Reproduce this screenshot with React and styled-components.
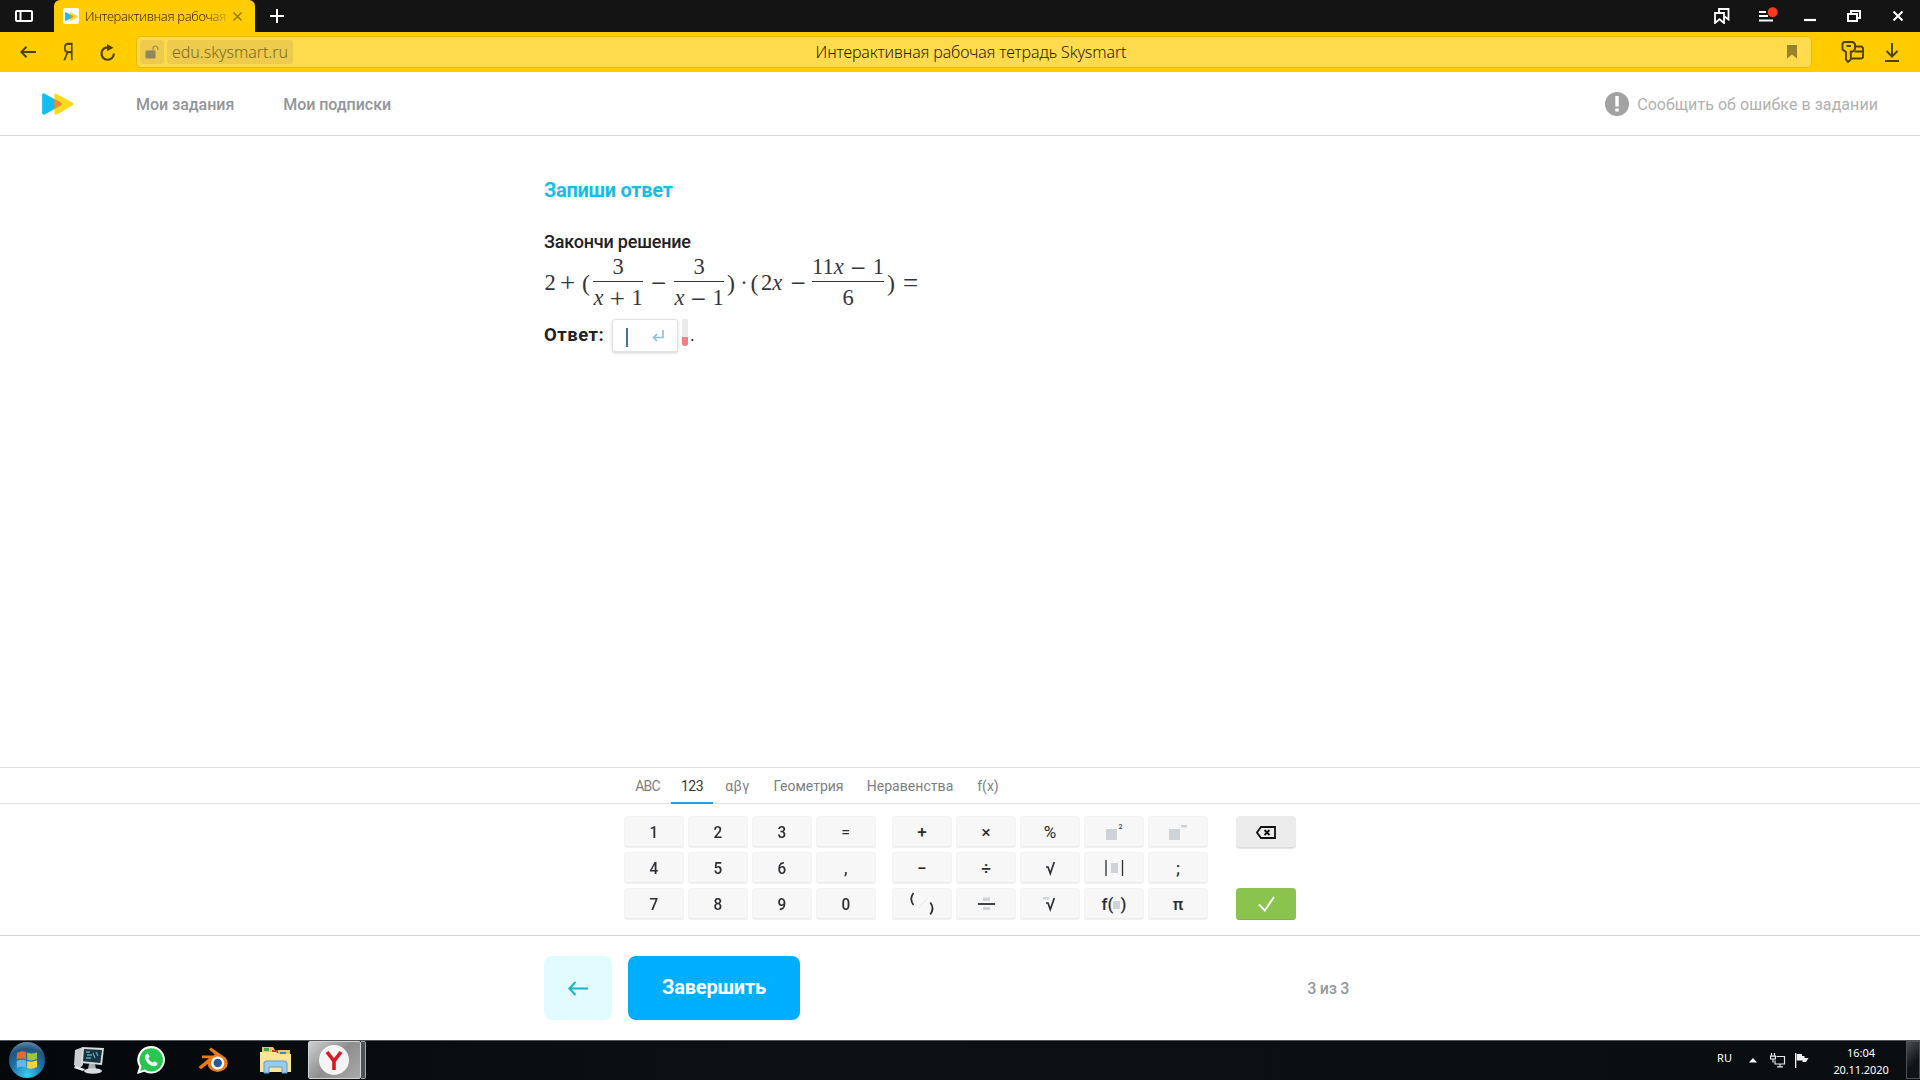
import React from "react"
import styled, { createGlobalStyle, css } from "styled-components"

const GlobalStyle = createGlobalStyle`
    * {
        box-sizing: border-box;
    }
    body {
        margin: 0;
        background: #fff;
        overflow: hidden;
        font-family: Roboto, "Liberation Sans", sans-serif;
    }
    button {
        border: none;
        padding: 0;
        margin: 0;
        background: none;
        font-family: inherit;
    }
    svg {
        display: block;
        flex-shrink: 0;
    }
`

const digits = ["1", "2", "3", "=", "4", "5", "6", ",", "7", "8", "9", "0"]

export default function App() {
    return (
        <>
            <GlobalStyle />
            <Screen>
                <BrowserTabs />
                <BrowserToolbar />
                <SiteHeader />
                <Task />
                <MathKeyboard />
                <BottomBar />
                <Taskbar />
            </Screen>
        </>
    )
}

function PlayLogo({ width, height }) {
    return (
        <svg width={width} height={height} viewBox="0 0 32 22">
            <path
                d="M14 0.4L30.4 9.4Q32.6 11 30.4 12.6L15 21.6Q12.5 22.4 12.4 20V2Q12.4 0.2 14 0.4Z"
                fill="#fddb1c"
            />
            <path
                d="M2.4 0.5L18.6 9.4Q21 11 18.6 12.6L2.8 21.5Q0.2 22.4 0.1 20V2Q0.3 -0.2 2.4 0.5Z"
                fill="#12bcf5"
            />
            <path
                d="M12.4 6L18.6 9.4Q21 11 18.6 12.6L12.4 16.1Z"
                fill="#f58a1f"
            />
        </svg>
    )
}

function BrowserTabs() {
    return (
        <TabStrip>
            <PanelCell>
                <svg width="18" height="12" viewBox="0 0 18 12" fill="none" stroke="#fff" strokeWidth="2">
                    <rect x="1" y="1" width="16" height="10" rx="1" />
                    <path d="M5.5 1V11" />
                </svg>
            </PanelCell>
            <BrowserTab>
                <Favicon>
                    <PlayLogo width={13} height={9} />
                </Favicon>
                <TabTitle>Интерактивная рабочая</TabTitle>
                <svg width="9" height="9" viewBox="0 0 9 9" stroke="#8d7413" strokeWidth="1.3">
                    <path d="M0.5 0.5L8.5 8.5M8.5 0.5L0.5 8.5" />
                </svg>
            </BrowserTab>
            <NewTab>
                <svg width="14" height="14" viewBox="0 0 14 14" stroke="#fff" strokeWidth="2">
                    <path d="M7 0V14M0 7H14" />
                </svg>
            </NewTab>
            <WindowCell>
                <svg width="16" height="16" viewBox="0 0 16 16" fill="none" stroke="#fff" strokeWidth="1.8">
                    <path d="M1 5H10V15L5.5 11.2L1 15Z" />
                    <path d="M5 5V1H14.5V11.5L10.5 8.5" />
                </svg>
            </WindowCell>
            <WindowCell>
                <svg width="24" height="18" viewBox="0 0 24 18">
                    <path d="M5 5H12M5 9H14M5 13.5H19" stroke="#fff" strokeWidth="2" />
                    <circle cx="18.7" cy="5.2" r="5" fill="#ff3b1f" />
                </svg>
            </WindowCell>
            <WindowCell>
                <svg width="12" height="16" viewBox="0 0 12 16">
                    <path d="M0 12H12" stroke="#fff" strokeWidth="2.2" />
                </svg>
            </WindowCell>
            <WindowCell>
                <svg width="14" height="12" viewBox="0 0 14 12" fill="none" stroke="#fff" strokeWidth="2">
                    <rect x="1" y="4" width="9" height="7" />
                    <path d="M4 4V1H13V8H10" />
                </svg>
            </WindowCell>
            <WindowCell>
                <svg width="10" height="10" viewBox="0 0 10 10" stroke="#fff" strokeWidth="2">
                    <path d="M0.5 0.5L9.5 9.5M9.5 0.5L0.5 9.5" />
                </svg>
            </WindowCell>
        </TabStrip>
    )
}

function BrowserToolbar() {
    return (
        <Toolbar>
            <ToolCell>
                <svg width="16" height="12" viewBox="0 0 16 12" fill="none" stroke="#4d4112" strokeWidth="2">
                    <path d="M16 6H1.5M6.5 0.8L1.3 6L6.5 11.2" />
                </svg>
            </ToolCell>
            <ToolCell>
                <YandexLetter>Я</YandexLetter>
            </ToolCell>
            <ToolCell>
                <svg width="16" height="17" viewBox="0 0 16 17">
                    <path d="M13.9 9.5A6.2 6.2 0 1 1 8.5 3.4" fill="none" stroke="#4d4112" strokeWidth="2.2" />
                    <path d="M7 0L13.5 3.8L7 7.2Z" fill="#4d4112" />
                </svg>
            </ToolCell>
            <AddressBar>
                <LockChip>
                    <svg width="14" height="14" viewBox="0 0 14 14">
                        <rect x="0.5" y="5.5" width="10" height="8" rx="1" fill="#8f855f" />
                        <path d="M8 6V3.5A2.4 2.4 0 0 1 12.8 3.5V5" fill="none" stroke="#a3965a" strokeWidth="1.4" />
                    </svg>
                </LockChip>
                <UrlChip>edu.skysmart.ru</UrlChip>
                <PageTitle>Интерактивная рабочая тетрадь Skysmart</PageTitle>
                <svg width="10" height="14" viewBox="0 0 10 14">
                    <path d="M0 0H10V13.5L5 9.5L0 13.5Z" fill="#96812d" />
                </svg>
            </AddressBar>
            <ToolCell>
                <svg width="23" height="22" viewBox="0 0 23 22" fill="none" stroke="#4d4112" strokeWidth="1.9" strokeLinejoin="round">
                    <path d="M3 1H12L14 3V8L12 10.5H9.8V18.5L7 21L5 18.5V11L1.5 8.5V2.5Z" />
                    <path d="M5.5 5H10" />
                    <path d="M14.5 5.5H20.5L22 7V16.5L20.5 17.5H10.5M13.5 10.5H22" />
                </svg>
            </ToolCell>
            <ToolCell>
                <svg width="14" height="19" viewBox="0 0 14 19" fill="none" stroke="#4d4112" strokeWidth="2">
                    <path d="M7 0V13M1.5 8L7 13.5L12.5 8M0 18H14" />
                </svg>
            </ToolCell>
        </Toolbar>
    )
}

function SiteHeader() {
    return (
        <Header>
            <LogoLink>
                <PlayLogo width={32} height={22} />
            </LogoLink>
            <NavLink>Мои задания</NavLink>
            <NavLink>Мои подписки</NavLink>
            <Report>
                <ReportBadge>
                    <svg width="4" height="16" viewBox="0 0 4 16" fill="#fff">
                        <rect x="0.3" width="3.4" height="10.5" />
                        <rect x="0.3" y="12.5" width="3.4" height="3" />
                    </svg>
                </ReportBadge>
                <ReportText>Сообщить об ошибке в задании</ReportText>
            </Report>
        </Header>
    )
}

function Task() {
    return (
        <Main>
            <TaskTitle>Запиши ответ</TaskTitle>
            <TaskText>Закончи решение</TaskText>
            <Formula>
                <Term $w={12}>2</Term>
                <Sign $w={23}>+</Sign>
                <Paren $w={14}>(</Paren>
                <Fraction $w={50}>
                    <Numerator>3</Numerator>
                    <Denominator>
                        <i>x</i>
                        <Sign $w={28}>+</Sign>1
                    </Denominator>
                </Fraction>
                <Sign $w={31}>−</Sign>
                <Fraction $w={50}>
                    <Numerator>3</Numerator>
                    <Denominator>
                        <i>x</i>
                        <Sign $w={28}>−</Sign>1
                    </Denominator>
                </Fraction>
                <Paren $w={14}>)</Paren>
                <Term $w={12}>·</Term>
                <Paren $w={9}>(</Paren>
                <Term $w={25}>
                    2<i>x</i>
                </Term>
                <Sign $w={28}>−</Sign>
                <Fraction $w={72}>
                    <Numerator>
                        11<i>x</i>
                        <Sign $w={29}>−</Sign>1
                    </Numerator>
                    <Denominator>6</Denominator>
                </Fraction>
                <Paren $w={14}>)</Paren>
                <Sign $w={25}>=</Sign>
            </Formula>
            <AnswerRow>
                <AnswerLabel>Ответ:</AnswerLabel>
                <AnswerBox>
                    <Caret />
                    <svg width="12" height="12" viewBox="0 0 12 12" fill="none" stroke="#8fbde2" strokeWidth="1.6">
                        <path d="M11 0V7.5H1.5M5 4L1.5 7.5L5 11" />
                    </svg>
                </AnswerBox>
                <Attempts>
                    <AttemptsFill />
                </Attempts>
                <Dot>.</Dot>
            </AnswerRow>
        </Main>
    )
}

function MathKeyboard() {
    return (
        <Keyboard>
            <KeyTabs>
                <KeyTab $w={47} $ls="-0.9px">
                    ABC
                </KeyTab>
                <KeyTab $w={42} $ls="-0.6px" $active>
                    123
                </KeyTab>
                <KeyTab $w={49} $ls="0.5px">
                    αβγ
                </KeyTab>
                <KeyTab $w={93}>Геометрия</KeyTab>
                <KeyTab $w={110} $ls="0.05px">
                    Неравенства
                </KeyTab>
                <KeyTab $w={46}>f(x)</KeyTab>
            </KeyTabs>
            <KeyArea>
                <KeyGrid $cols={4}>
                    {digits.map((d) => (
                        <Key key={d} $light={d === "="}>
                            <Glyph $narrow={d !== "=" && d !== ","}>{d}</Glyph>
                        </Key>
                    ))}
                </KeyGrid>
                <KeyGrid $cols={5}>
                    <Key>+</Key>
                    <Key>×</Key>
                    <Key $light>%</Key>
                    <Key>
                        <svg width="60" height="32" viewBox="0 0 60 32">
                            <rect x="22" y="13" width="11" height="11" fill="#cfd3d8" />
                            <text x="34.5" y="12.5" fontSize="7" fill="#3c4046">
                                2
                            </text>
                        </svg>
                    </Key>
                    <Key>
                        <svg width="60" height="32" viewBox="0 0 60 32" fill="#cfd3d8">
                            <rect x="21" y="13" width="11" height="11" />
                            <rect x="33" y="9" width="6" height="2.5" />
                        </svg>
                    </Key>
                    <Key>−</Key>
                    <Key>÷</Key>
                    <Key>
                        <Root />
                    </Key>
                    <Key>
                        <svg width="60" height="32" viewBox="0 0 60 32">
                            <path d="M22 8V24M38.5 8V24" stroke="#2b2e33" strokeWidth="1.3" />
                            <rect x="27" y="11" width="7" height="10" fill="#cfd3d8" />
                        </svg>
                    </Key>
                    <Key>;</Key>
                    <Key>
                        <svg width="60" height="32" viewBox="0 0 60 32" fill="none">
                            <path d="M21.5 5Q17 11 21.5 17M38.3 14.5Q42.8 20.5 38.3 26.5" stroke="#2b2e33" strokeWidth="1.7" />
                            <path d="M26 20L36 10" stroke="#ececec" />
                        </svg>
                    </Key>
                    <Key>
                        <svg width="60" height="32" viewBox="0 0 60 32">
                            <path d="M22 16H39" stroke="#2b2e33" strokeWidth="1.8" />
                            <rect x="27" y="9.5" width="7" height="3.5" fill="#cfd3d8" />
                            <rect x="27" y="19" width="7" height="3" fill="#cfd3d8" />
                        </svg>
                    </Key>
                    <Key>
                        <Root nth />
                    </Key>
                    <Key>
                        f(
                        <Slot />)
                    </Key>
                    <Key>π</Key>
                </KeyGrid>
                <SideKeys>
                    <EraseKey>
                        <svg width="20" height="13" viewBox="0 0 20 13" fill="none" stroke="#111" strokeWidth="1.8">
                            <path d="M5 1H19V12H5L1 6.5Z" />
                            <path d="M8.5 4L13.5 9M13.5 4L8.5 9" />
                        </svg>
                    </EraseKey>
                    <ConfirmKey>
                        <svg width="17" height="16" viewBox="0 0 17 16" fill="none" stroke="#fff" strokeWidth="1.8">
                            <path d="M1 8.5L6.8 14.5L16 1" />
                        </svg>
                    </ConfirmKey>
                </SideKeys>
            </KeyArea>
        </Keyboard>
    )
}

function Root({ nth }) {
    return (
        <svg width="60" height="32" viewBox="0 0 60 32" fill="none">
            {nth && <rect x="23" y="9" width="6" height="2.5" fill="#cfd3d8" />}
            <path d="M26 15H28L30.3 21.5L34.3 10" stroke="#2b2e33" strokeWidth="1.7" />
        </svg>
    )
}

function BottomBar() {
    return (
        <Footer>
            <BackButton>
                <svg width="20" height="15" viewBox="0 0 20 15" fill="none" stroke="#14b4c8" strokeWidth="1.9">
                    <path d="M20 7.5H1.5M7.5 1L1.3 7.5L7.5 14" />
                </svg>
            </BackButton>
            <FinishButton>Завершить</FinishButton>
            <Progress>3 из 3</Progress>
        </Footer>
    )
}

function Taskbar() {
    return (
        <Panel>
            <StartCell>
                <StartOrb>
                    <svg width="22" height="20" viewBox="0 0 22 20">
                        <path d="M1 3Q5.5 0 10 2.2V9.4Q5.5 7.6 0.6 9.6Z" fill="#e8692c" />
                        <path d="M11.2 2.6Q16 4.6 21 2.2V9Q16 11.4 11.2 9.8Z" fill="#9cc63c" />
                        <path d="M0.6 10.8Q5.5 8.8 10 10.6V17.6Q5.5 15.6 1 18Z" fill="#6db4ea" />
                        <path d="M11.2 11Q16 12.6 21 10.2V17Q16 19.8 11.2 18Z" fill="#fbd13c" />
                    </svg>
                </StartOrb>
            </StartCell>
            <AppCell>
                <svg width="32" height="30" viewBox="0 0 32 30">
                    <path d="M2 5L10 2V20L6 24L1 20Z" fill="#c9ced1" />
                    <path d="M9 2L31 3L29 20L8 18Z" fill="#d7dcde" />
                    <path d="M11 4L29 5L27.3 18L10 16.2Z" fill="#17333d" />
                    <path d="M13 7H17M14 10H19M20 8L22 13M23 7L25 11M13 13H18" stroke="#5ca5b5" strokeWidth="1.3" />
                    <path d="M16 19H22L23 24H15Z" fill="#a9afb2" />
                    <ellipse cx="20" cy="26" rx="9" ry="2.8" fill="#d9dddf" />
                    <path d="M2 21L12 24L10 26L1 23Z" fill="#eceeee" />
                </svg>
            </AppCell>
            <AppCell>
                <svg width="30" height="30" viewBox="0 0 30 30">
                    <path
                        d="M15 1A13.8 13.8 0 1 1 8.3 26.8L1 29L3.2 21.8A13.8 13.8 0 0 1 15 1Z"
                        fill="#fff"
                    />
                    <path
                        d="M15 3.2A11.7 11.7 0 1 1 8.7 24.6L4.1 26L5.5 21.5A11.7 11.7 0 0 1 15 3.2Z"
                        fill="#29c64f"
                    />
                    <path
                        d="M10.5 9Q12 8 12.6 9.5L13.4 11.5Q13.4 12.4 12.2 13.4Q13.8 16.5 16.8 17.8L18.3 16.2L21.5 17.9Q21.6 20.7 18 21.2Q11.5 20.4 8.8 13.2Q8.6 10.5 10.5 9Z"
                        fill="#fff"
                    />
                </svg>
            </AppCell>
            <AppCell>
                <svg width="31" height="26" viewBox="0 0 31 26">
                    <path
                        d="M13 0.5L28 11Q32 18 26.5 22.5Q19 27.5 12.2 22Q9.8 19.6 9.6 17L3 22.2L0.5 20L11 11.2H4V8.6H15.5L16.8 7.6L11 2.5Z"
                        fill="#ea7b17"
                    />
                    <circle cx="19.7" cy="16" r="6.6" fill="#fff" />
                    <circle cx="19.7" cy="16" r="4.2" fill="#2a5796" />
                </svg>
            </AppCell>
            <AppCell>
                <svg width="33" height="30" viewBox="0 0 33 30">
                    <path d="M3 2H14L16 5H31V27H3Z" fill="#e8c964" />
                    <path d="M5 3H10V6H5Z" fill="#47a447" />
                    <path d="M13 5H19V8H13Z" fill="#c9402c" />
                    <path d="M21 7H27V9H21Z" fill="#3c86c9" />
                    <path d="M1 7H17L19 9H32V27H1Z" fill="#f8e596" />
                    <path d="M5 28V18Q5 16 8 16H25Q28 16 28 18V28H23V22H10V28Z" fill="#9ccbe8" stroke="#5f9fca" />
                </svg>
            </AppCell>
            <ActiveApp>
                <svg width="30" height="30" viewBox="0 0 30 30">
                    <circle cx="15" cy="15" r="15" fill="#f4f4f4" />
                    <path d="M8 7L15 16L22 7M15 15.5V25" fill="none" stroke="#d81922" strokeWidth="3.6" />
                </svg>
            </ActiveApp>
            <StackEdge />
            <Tray>
                <Lang>RU</Lang>
                <svg width="8" height="5" viewBox="0 0 8 5">
                    <path d="M4 0L8 4.5H0Z" fill="#fff" />
                </svg>
                <NetworkIcon width="16" height="15" viewBox="0 0 16 15" fill="none" stroke="#e8e8e8" strokeWidth="1.2">
                    <path d="M6.5 3.5H14.5V11H5V7.5" />
                    <path d="M1.5 0V3M4.5 0V3M0.6 3.2H5.4V6H0.6ZM3 6V9.5M7 13.8H13M10 11V14" />
                </NetworkIcon>
                <svg width="15" height="15" viewBox="0 0 15 15" fill="#f2f2f2">
                    <path d="M1 0H2.3V15H1ZM2.8 1H8V3H10.5V5H14.5L12 9H8.5V7.5H2.8Z" />
                </svg>
            </Tray>
            <Clock>
                <ClockLine>16:04</ClockLine>
                <ClockLine $ls="-0.1px">20.11.2020</ClockLine>
            </Clock>
            <ShowDesktop />
        </Panel>
    )
}

const Screen = styled.div`
    width: 1920px;
    height: 1080px;
    display: flex;
    flex-direction: column;
    overflow: hidden;
`

const uiFont = css`
    font-family: "Noto Sans", "Open Sans", sans-serif;
    font-weight: 300;
`

const center = css`
    display: flex;
    align-items: center;
    justify-content: center;
`

/* browser */
const TabStrip = styled.div`
    height: 32px;
    flex-shrink: 0;
    background: #141414;
    display: flex;
`
const PanelCell = styled.div`
    ${center}
    width: 48px;
    margin-right: 6px;
`
const BrowserTab = styled.div`
    width: 201px;
    background: #ffcc00;
    border-radius: 6px 6px 0 0;
    display: flex;
    align-items: center;
    padding-left: 9px;
`
const Favicon = styled.div`
    ${center}
    width: 16px;
    height: 16px;
    background: #fff;
    border-radius: 2px;
`
const TabTitle = styled.div`
    ${uiFont}
    width: 143px;
    margin: 0 5px 0 6px;
    font-size: 13px;
    letter-spacing: -0.33px;
    color: transparent;
    white-space: nowrap;
    background: linear-gradient(90deg, #3a2400 84%, #d9ae00 100%);
    background-clip: text;
`
const NewTab = styled.div`
    ${center}
    width: 44px;
    margin-right: auto;
`
const WindowCell = styled.div`
    ${center}
    width: 44px;
`

const Toolbar = styled.div`
    height: 40px;
    flex-shrink: 0;
    background: #ffcc00;
    display: flex;
    align-items: center;
    padding: 0 8px;
`
const ToolCell = styled.div`
    ${center}
    width: 40px;
    height: 40px;
`
const YandexLetter = styled.span`
    font-family: "Liberation Sans", sans-serif;
    font-size: 23px;
    line-height: 24px;
    color: #4d4112;
    transform: scaleX(0.64);
    -webkit-text-stroke: 0.4px #4d4112;
`
const AddressBar = styled.div`
    flex: 1;
    height: 32px;
    margin: 0 20px 0 8px;
    padding: 0 14px 0 3px;
    background: #ffdb4d;
    border: 1px solid #e9bb0c;
    border-radius: 5px;
    display: flex;
    align-items: center;
`
const LockChip = styled.div`
    ${center}
    width: 24px;
    height: 24px;
    margin-right: 3px;
    background: #eecb4c;
    border-radius: 3px;
`
const UrlChip = styled.div`
    ${uiFont}
    ${center}
    width: 126px;
    height: 24px;
    font-size: 16px;
    letter-spacing: -0.05px;
    color: #7d6a20;
    background: #eecb4c;
    border-radius: 3px;
`
const PageTitle = styled.div`
    ${uiFont}
    flex: 1;
    text-align: center;
    padding-right: 138px;
    font-size: 16px;
    letter-spacing: -0.11px;
    color: #2d1a05;
`

/* site header */
const Header = styled.header`
    height: 64px;
    flex-shrink: 0;
    border-bottom: 1px solid #d9d9d9;
    display: flex;
    align-items: center;
    padding: 0 42px;
`
const LogoLink = styled.div`
    width: 94px;
`
const NavLink = styled.a`
    margin-right: 49px;
    padding-top: 2px;
    font-size: 16px;
    font-weight: 500;
    letter-spacing: -0.04px;
    color: #92959a;
`
const Report = styled.div`
    display: flex;
    align-items: center;
    margin-left: auto;
`
const ReportText = styled.span`
    padding-top: 2px;
    font-size: 16px;
    letter-spacing: 0.06px;
    color: #b0b0b0;
`
const ReportBadge = styled.span`
    ${center}
    width: 24px;
    height: 24px;
    margin-right: 8px;
    border-radius: 50%;
    background: #a2a2a2;
`

/* task */
const Main = styled.main`
    flex: 1;
    width: 832px;
    margin: 0 auto;
    padding-top: 42px;
`
const TaskTitle = styled.h1`
    margin: 0;
    font-size: 20px;
    line-height: 24px;
    font-weight: 700;
    letter-spacing: -0.28px;
    color: #17bce8;
`
const TaskText = styled.p`
    margin: 28px 0 0;
    font-size: 18px;
    line-height: 24px;
    font-weight: 500;
    letter-spacing: -0.2px;
    color: #1f2126;
`
const Formula = styled.div`
    display: flex;
    align-items: center;
    height: 54px;
    margin-top: 1px;
    font-family: "Liberation Serif", serif;
    font-size: 22.5px;
    line-height: 22px;
    color: #34363b;
`
const Term = styled.span`
    width: ${({ $w }) => $w}px;
    padding-top: 1px;
    text-align: center;
    white-space: nowrap;
`
const Sign = styled.span`
    display: inline-block;
    width: ${({ $w }) => $w}px;
    padding-top: 2px;
    text-align: center;
    font-size: 27px;
    line-height: 20px;
    vertical-align: -3px;
`
const Paren = styled(Term)`
    font-size: 24px;
`
const Fraction = styled.span`
    width: ${({ $w }) => $w}px;
    display: flex;
    flex-direction: column;
    align-items: center;
`
const Numerator = styled.span`
    height: 28px;
    line-height: 28px;
    white-space: nowrap;
`
const Denominator = styled.span`
    width: 100%;
    height: 30px;
    line-height: 31px;
    border-top: 1px solid #34363b;
    text-align: center;
    white-space: nowrap;
`
const AnswerRow = styled.div`
    display: flex;
    margin-top: 10px;
    height: 34px;
`
const AnswerLabel = styled.span`
    width: 68px;
    padding-top: 4px;
    font-size: 18.5px;
    line-height: 24px;
    font-weight: 700;
    letter-spacing: 0.5px;
    color: #1f2126;
`
const AnswerBox = styled.div`
    width: 66px;
    height: 33px;
    padding: 1px 13px 0 13px;
    display: flex;
    align-items: center;
    justify-content: space-between;
    background: #fff;
    border: 1px solid #e1e3e6;
    border-radius: 3px;
    box-shadow: 0 1px 3px rgba(0, 0, 0, 0.18);
`
const Caret = styled.span`
    width: 2px;
    height: 19px;
    margin-top: 2px;
    background: #4b6f9f;
`
const Attempts = styled.div`
    width: 6px;
    height: 27px;
    margin-left: 4px;
    border-radius: 0 0 3px 3px;
    background: #e9eaec;
    display: flex;
    align-items: flex-end;
    overflow: hidden;
`
const AttemptsFill = styled.div`
    width: 100%;
    height: 9px;
    background: #ee7f86;
`
const Dot = styled.span`
    margin: 4px 0 0 2px;
    font-size: 18px;
    line-height: 24px;
    color: #1f2126;
`

/* keyboard */
const Keyboard = styled.section`
    height: 169px;
    flex-shrink: 0;
    border-top: 1px solid #e0e0e0;
    border-bottom: 1px solid #d6d6d6;
`
const KeyTabs = styled.div`
    height: 36px;
    padding-left: 624px;
    border-bottom: 1px solid #e0e0e0;
    display: flex;
`
const KeyTab = styled.div`
    ${center}
    width: ${({ $w }) => $w}px;
    height: 36px;
    font-size: 14px;
    letter-spacing: ${({ $ls }) => $ls || "0"};
    padding-top: 2px;
    color: ${({ $active }) => ($active ? "#33363b" : "#7c7f83")};
    border-bottom: 2px solid ${({ $active }) => ($active ? "#279fdf" : "transparent")};
`
const KeyArea = styled.div`
    display: flex;
    width: 672px;
    margin: 12px auto 0;
`
const KeyGrid = styled.div`
    display: grid;
    grid-template-columns: repeat(${({ $cols }) => $cols}, 60px);
    grid-auto-rows: 32px;
    gap: 4px;
    margin-right: ${({ $cols }) => ($cols === 4 ? 16 : 28)}px;
`
const Key = styled.button`
    ${center}
    font-size: 17px;
    font-weight: ${({ $light }) => ($light ? 400 : 500)};
    color: #2b2e33;
    background: #f7f7f7;
    border-radius: 4px;
    box-shadow: inset 0 0 0 1px #f2f2f2, inset 0 -2px 0 #ededed;
`
const Glyph = styled.span`
    transform: scaleX(${({ $narrow }) => ($narrow ? 0.9 : 0.95)});
`
const Slot = styled.span`
    width: 7px;
    height: 8px;
    margin-top: 1px;
    background: #cfd3d8;
`
const SideKeys = styled.div`
    display: flex;
    flex-direction: column;
    justify-content: space-between;
`
const EraseKey = styled(Key)`
    width: 60px;
    height: 32px;
    background: #ececec;
    box-shadow: inset 0 -1px 0 #dcdcdc, 0 1px 1px #e4e4e4;
`
const ConfirmKey = styled(Key)`
    width: 60px;
    height: 32px;
    background: #8bc34f;
    box-shadow: inset 0 -1px 0 #7db545;
`

/* bottom bar */
const Footer = styled.footer`
    width: 832px;
    height: 104px;
    flex-shrink: 0;
    margin: 0 auto;
    padding: 20px 27px 0 0;
    display: flex;
`
const BackButton = styled.button`
    ${center}
    width: 68px;
    height: 64px;
    margin-right: 16px;
    border-radius: 8px;
    background: #e2fbff;
`
const FinishButton = styled.button`
    width: 172px;
    height: 64px;
    padding-bottom: 2px;
    border-radius: 8px;
    background: #00aeff;
    color: #fff;
    font-size: 20px;
    font-weight: 700;
    letter-spacing: -0.2px;
`
const Progress = styled.span`
    margin-left: auto;
    padding-top: 1px;
    line-height: 64px;
    font-size: 16px;
    font-weight: 500;
    letter-spacing: -0.3px;
    color: #96999d;
`

/* taskbar */
const Panel = styled.div`
    height: 40px;
    flex-shrink: 0;
    display: flex;
    padding-bottom: 1px;
    background: linear-gradient(90deg, #05080b 0%, #0d1114 40%, #0a0e10 100%);
    border-top: 1px solid #51575b;
`
const StartCell = styled.div`
    ${center}
    width: 54px;
    margin-right: 4px;
`
const StartOrb = styled.div`
    ${center}
    width: 36px;
    height: 36px;
    border-radius: 50%;
    background: radial-gradient(circle at 50% 92%, #39d2f2 0%, #1d6ea6 45%, #22557f 70%, #8fb1c7 100%);
`
const AppCell = styled.div`
    ${center}
    width: 62px;
`
const ActiveApp = styled.div`
    ${center}
    width: 53px;
    margin-left: 2px;
    padding-right: 2px;
    border: 1px solid #d5d5d5;
    border-radius: 2px;
    background: linear-gradient(135deg, #cfcfcf 0%, #8e8e8e 50%, #a9a9a9 100%);
`
const StackEdge = styled.div`
    width: 5px;
    border: 1px solid #a9a9a9;
    border-left: none;
    border-radius: 0 2px 2px 0;
    background: #4e5254;
`
const Tray = styled.div`
    margin-left: auto;
    display: flex;
    align-items: center;
    gap: 9px;
    padding-top: 1px;
`
const NetworkIcon = styled.svg`
    margin-left: 4px;
    margin-right: -1px;
`
const Lang = styled.span`
    margin-right: 8px;
    padding-bottom: 6px;
    font-family: "Noto Sans", sans-serif;
    font-size: 11px;
    color: #fff;
`
const Clock = styled.div`
    ${center}
    width: 97px;
    padding: 1px 0 0 7px;
    flex-direction: column;
`
const ClockLine = styled.span`
    font-family: "Noto Sans", sans-serif;
    font-size: 11px;
    line-height: 17px;
    letter-spacing: ${({ $ls }) => $ls || "0"};
    color: #fff;
`
const ShowDesktop = styled.div`
    width: 14px;
    border: 1px solid #4d5256;
    background: linear-gradient(135deg, #4a4f53, #101416 60%);
`
